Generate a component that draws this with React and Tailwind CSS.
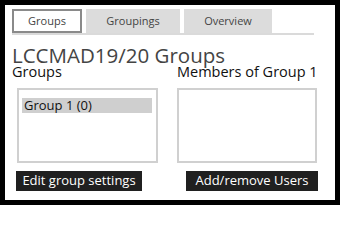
export default function App() {
  const font = { fontFamily: '"Open Sans", "Noto Sans", sans-serif' };
  return (
    <div className="w-[340px] h-[205px] bg-black p-[5px]" style={font}>
      <div className="w-[330px] h-[195px] bg-white px-[7px] pt-[4px]">
        <div className="w-[302px]">
          <div className="flex items-end h-[24px]">
            <div className="w-[70px] h-[24px] border-2 border-[#8a8a8a] bg-white flex items-center justify-center text-[11px] text-[#444]">
              Groups
            </div>
            <div className="ml-[4px] w-[94px] h-[24px] bg-[#dcdcdc] flex items-center justify-center text-[11px] text-[#444]">
              Groupings
            </div>
            <div className="ml-[4px] w-[88px] h-[24px] bg-[#dcdcdc] flex items-center justify-center text-[11px] text-[#444]">
              Overview
            </div>
          </div>
          <div className="h-[2px] bg-[#dadada]" />
        </div>
        <div className="mt-[10px] text-[20.5px] leading-[20px] text-[#444]">LCCMAD19/20 Groups</div>
        <div className="flex">
          <div className="w-[165px] flex flex-col">
            <div className="text-[14.5px] leading-[13px] text-[#111]">Groups</div>
            <div className="mt-[10px] ml-[5px] w-[141px] h-[75px] border-2 border-[#d0d0d0] pt-[8px] pl-[3px] pr-[4px]">
              <div className="bg-[#cfcfcf] h-[15px] flex items-center px-[2px] text-[13px] text-[#111]">
                Group 1 (0)
              </div>
            </div>
            <div className="mt-[8px] ml-[4px] w-[126px] h-[20px] bg-[#202020] text-white text-[13px] flex items-center justify-center">
              Edit group settings
            </div>
          </div>
          <div className="flex flex-col">
            <div className="text-[14.5px] leading-[13px] text-[#111]">Members of Group 1</div>
            <div className="mt-[10px] w-[140px] h-[75px] border-2 border-[#d0d0d0]" />
            <div className="mt-[8px] ml-[9px] w-[132px] h-[20px] bg-[#202020] text-white text-[13px] flex items-center justify-center">
              Add/remove Users
            </div>
          </div>
        </div>
      </div>
    </div>
  );
}
